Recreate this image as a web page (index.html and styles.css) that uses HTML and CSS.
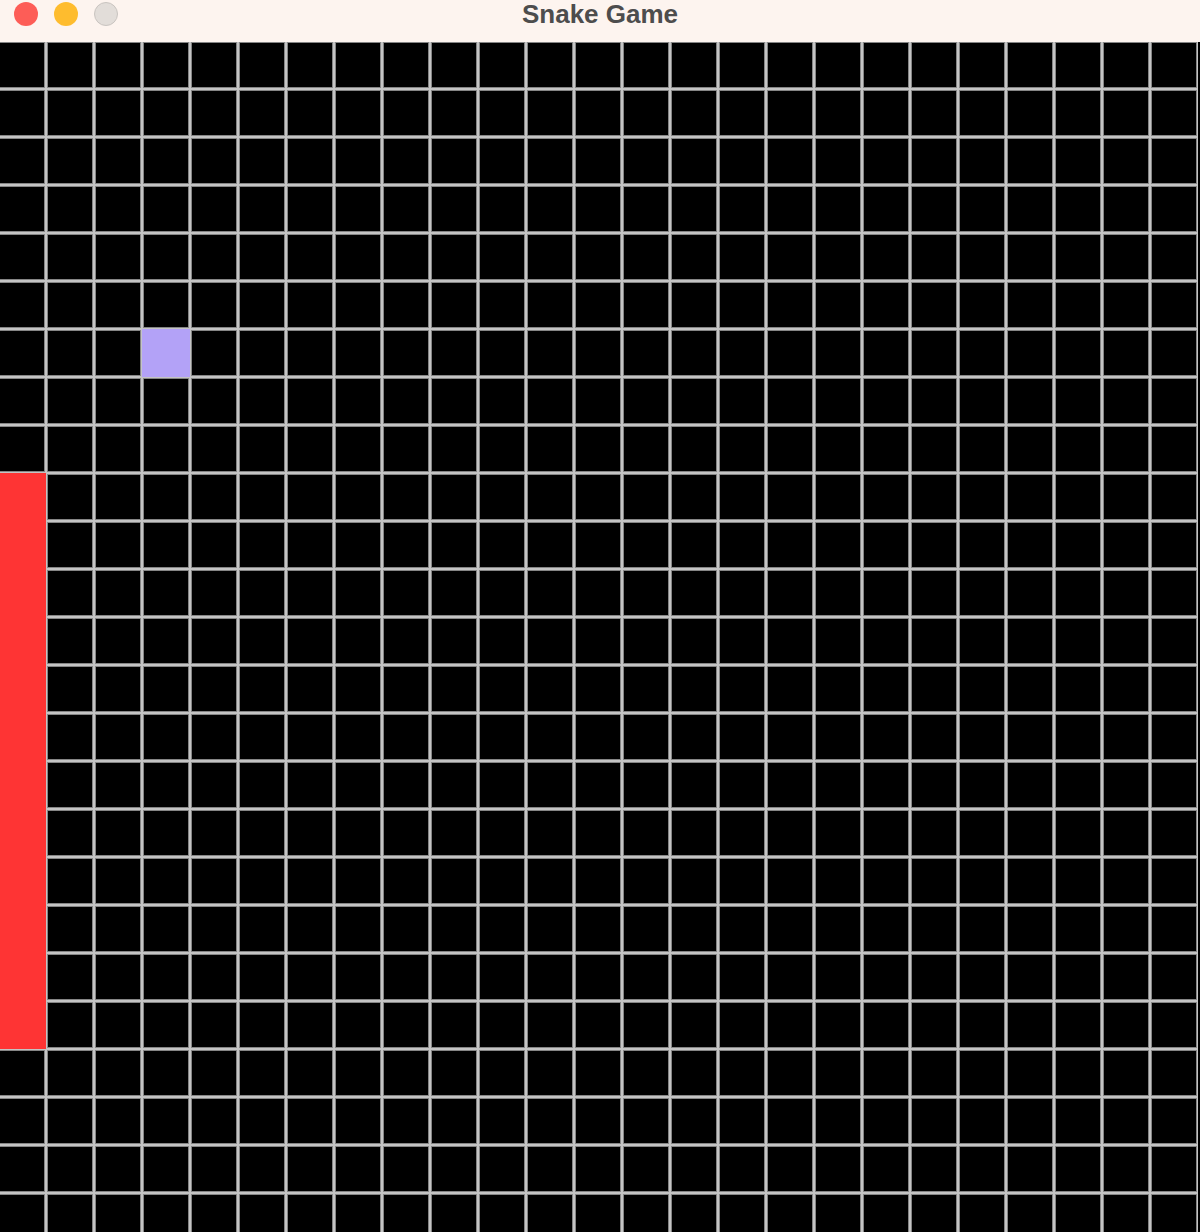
FILE: index.html
```html
<!DOCTYPE html>
<html lang="en">
<head>
    <meta charset="UTF-8">
    <meta name="viewport" content="width=device-width, initial-scale=1.0">
    <title>Snake Game</title>
    <link rel="stylesheet" href="styles.css">
</head>
<body>
    <div class="titlebar">
        <div class="lights">
            <span class="light close"></span>
            <span class="light minimize"></span>
            <span class="light zoom"></span>
        </div>
        <h1 class="title">Snake Game</h1>
    </div>
    <div class="board">
        <div class="grid" id="grid"></div>
    </div>
    <script>
        const COLS = 25, ROWS = 25;
        const snake = [];
        for (let r = 9; r <= 20; r++) snake.push(r + ",0");
        const food = "6,3";
        let grid = document.getElementById("grid");
        let html = "";
        for (let r = 0; r < ROWS; r++) {
            for (let c = 0; c < COLS; c++) {
                let key = r + "," + c;
                let cls = "cell";
                if (snake.includes(key)) cls += " snake";
                else if (key === food) cls += " food";
                html += `<div class="${cls}"></div>`;
            }
        }
        grid.innerHTML = html;
    </script>
</body>
</html>
```

FILE: styles.css
```css
body {
    margin: 0;
    width: 1200px;
    height: 1232px;
    overflow: hidden;
    background: #000;
    font-family: "Liberation Sans", Arial, sans-serif;
}
.titlebar {
    position: relative;
    z-index: 1;
    height: 42px;
    background: #fdf4ef;
    display: flex;
    align-items: flex-start;
    justify-content: center;
}
.lights {
    position: absolute;
    left: 14px;
    top: 2px;
    display: flex;
    gap: 16px;
}
.light {
    width: 24px;
    height: 24px;
    border-radius: 50%;
    box-sizing: border-box;
}
.close {
    background: #fd5d57;
}
.minimize {
    background: #febc2e;
}
.zoom {
    background: #e2ddd9;
    border: 1px solid #c9c4c0;
}
.title {
    margin: 0;
    padding-top: 0px;
    font-size: 26px;
    line-height: 28px;
    font-weight: bold;
    color: #4d4d4d;
}
.board {
    overflow: hidden;
}
.grid {
    display: grid;
    grid-template-columns: repeat(25, 48px);
    grid-auto-rows: 48px;
    margin: -1px 0 0 -2px;
}
.cell {
    background: #000;
    border: 1px solid #c4c4c4;
    box-shadow: inset 0 0 0 1px #858585;
}
.cell.snake {
    background: #fe3434;
    border-color: #fe3434;
    box-shadow: none;
}
.cell.food {
    background: #b3a2f7;
    border-color: #b3a2f7;
    box-shadow: none;
}
```
